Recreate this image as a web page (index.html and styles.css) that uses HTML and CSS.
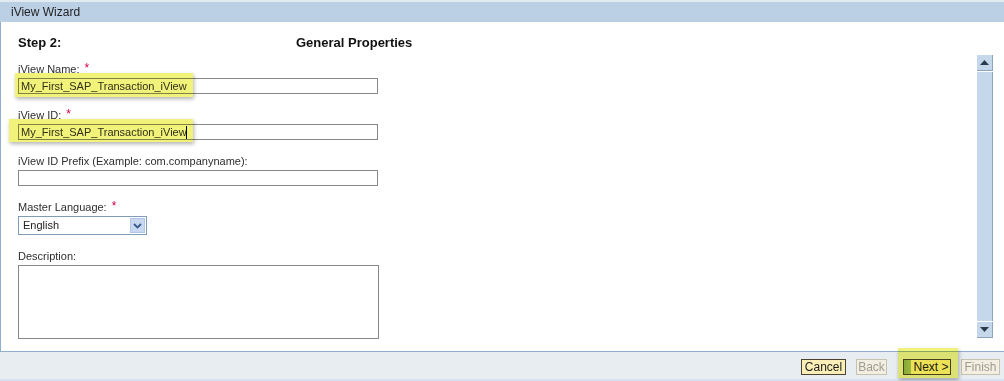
FILE: index.html
```html
<!DOCTYPE html>
<html lang="en">
<head>
  <meta charset="UTF-8" />
  <title>iView Wizard</title>
  <link rel="stylesheet" href="styles.css">
</head>
<body>
  <div class="titlebar">iView Wizard</div>

  <div class="panel">
    <div class="form">
      <div class="step">
        <span class="step-no">Step 2:</span>
        <span class="step-title">General Properties</span>
      </div>

      <div class="field">
        <label>iView Name: <span class="req">*</span></label>
        <input type="text" class="text" value="My_First_SAP_Transaction_iView" />
        <div class="mark mark-name"></div>
      </div>

      <div class="field">
        <label>iView ID: <span class="req">*</span></label>
        <input type="text" class="text" value="My_First_SAP_Transaction_iView" />
        <span class="caret"></span>
        <div class="mark mark-id"></div>
      </div>

      <div class="field">
        <label>iView ID Prefix (Example: com.companyname):</label>
        <input type="text" class="text" />
      </div>

      <div class="field">
        <label>Master Language: <span class="req">*</span></label>
        <div class="select">
          <span class="select-value">English</span>
          <span class="select-btn">
            <svg width="9" height="6" viewBox="0 0 9 6"><path d="M1 1 L4.5 4.5 L8 1" fill="none" stroke="#3a5a8c" stroke-width="1.8"/></svg>
          </span>
        </div>
      </div>

      <div class="field">
        <label>Description:</label>
        <textarea class="area"></textarea>
      </div>
    </div>

    <div class="scrollbar">
      <div class="sb-btn"><svg width="9" height="5" viewBox="0 0 9 5"><path d="M0 5 L4.5 0 L9 5 Z" fill="#2e3b4a"/></svg></div>
      <div class="sb-track"></div>
      <div class="sb-btn"><svg width="9" height="5" viewBox="0 0 9 5"><path d="M0 0 L4.5 5 L9 0 Z" fill="#2e3b4a"/></svg></div>
    </div>
  </div>

  <div class="footer">
    <button class="btn btn-active btn-cancel">Cancel</button>
    <button class="btn btn-off btn-back">Back</button>
    <div class="next-wrap">
      <button class="btn btn-active btn-next">Next &gt;</button>
      <div class="mark mark-next"></div>
    </div>
    <button class="btn btn-off btn-finish">Finish</button>
  </div>
  <div class="bottom-strip"></div>
</body>
</html>
```

FILE: styles.css
```css
body {
  margin: 0;
  font-family: 'Liberation Sans', Arial, sans-serif;
  font-size: 11px;
  color: #2b2b2b;
  background: #ffffff;
}
.titlebar {
  border-top: 2px solid #e2eaf2;
  background: #bcd0e5;
  height: 20px;
  line-height: 20px;
  padding-left: 11px;
  font-size: 12px;
  color: #1e1e1e;
}
.panel {
  display: flex;
  height: 329px;
  border-left: 1px solid #8eb0d2;
  border-bottom: 1px solid #8eb0d2;
  background: white;
}
.form {
  flex: 1;
  padding: 13px 0 0 17px;
}
.step {
  display: flex;
  height: 16px;
  line-height: 16px;
  font-size: 13px;
  font-weight: bold;
  color: #111;
  margin-bottom: 11px;
}
.step-no {
  width: 278px;
}
.field {
  position: relative;
  margin-bottom: 14px;
}
.field label {
  display: block;
  line-height: 14px;
  margin-bottom: 2px;
  color: #2e2e2e;
}
.req {
  color: #d4004a;
  font-size: 12px;
  margin-left: 2px;
  position: relative;
  top: -1px;
}
.text {
  display: block;
  box-sizing: border-box;
  width: 360px;
  height: 16px;
  border: 1px solid #888;
  padding: 0 2px;
  font-family: inherit;
  font-size: 11px;
  color: #333;
  margin: 0;
}
.caret {
  position: absolute;
  left: 168px;
  top: 18px;
  width: 1px;
  height: 13px;
  background: #000;
}
.mark {
  position: absolute;
  background: #f1f279;
  mix-blend-mode: multiply;
  box-shadow: 1px 2px 4px rgba(0, 0, 0, 0.3);
}
.mark-name {
  left: -3px;
  top: 11px;
  width: 178px;
  height: 24px;
}
.mark-id {
  left: -9px;
  top: 11px;
  width: 184px;
  height: 23px;
}
.select {
  display: flex;
  box-sizing: border-box;
  width: 129px;
  height: 19px;
  border: 1px solid #7f9db9;
}
.select-value {
  flex: 1;
  line-height: 17px;
  padding-left: 4px;
  color: #222;
}
.select-btn {
  width: 15px;
  margin: 1px;
  background: #c9d8f1;
  border: 1px solid #b4c6e6;
  box-sizing: border-box;
  display: flex;
  align-items: center;
  justify-content: center;
}
.area {
  display: block;
  box-sizing: border-box;
  width: 361px;
  height: 74px;
  border: 1px solid #888;
  margin: 0;
  resize: none;
}
.scrollbar {
  display: flex;
  flex-direction: column;
  width: 16px;
  margin: 33px 11px 13px 0;
}
.sb-btn {
  height: 16px;
  box-sizing: border-box;
  background: #c4d7eb;
  border-right: 1px solid #8ea5bd;
  border-bottom: 1px solid #8ea5bd;
  display: flex;
  align-items: center;
  justify-content: center;
}
.sb-track {
  flex: 1;
  margin: 1px 0;
  background: #c4d7eb;
  border-right: 1px solid #8ea5bd;
}
.footer {
  display: flex;
  justify-content: flex-end;
  align-items: center;
  gap: 10px;
  height: 27px;
  padding-right: 4px;
  background: #e8edf2;
}
.bottom-strip {
  height: 3px;
  background: #d6e2ef;
}
.btn {
  height: 16px;
  box-sizing: border-box;
  padding: 0;
  font-family: inherit;
  font-size: 12px;
  line-height: 14px;
  margin-top: 2px;
  white-space: nowrap;
  text-align: center;
}
.btn-cancel { width: 45px; }
.btn-back { width: 31px; }
.btn-finish { width: 39px; }
.btn-active {
  background: #fbefb7;
  border: 1px solid #4d4333;
  color: #222;
}
.btn-off {
  background: #f2eee2;
  border: 1px solid #c7c2b0;
  color: #a09c92;
}
.next-wrap {
  position: relative;
  margin-left: 6px;
  display: flex;
}
.btn-next {
  width: 48px;
  padding-left: 8px;
  background: linear-gradient(to right, #8cb270 0, #a5c388 7px, #fbefb7 7px);
}
.mark-next {
  left: -5px;
  top: -9px;
  width: 60px;
  height: 30px;
}
```
